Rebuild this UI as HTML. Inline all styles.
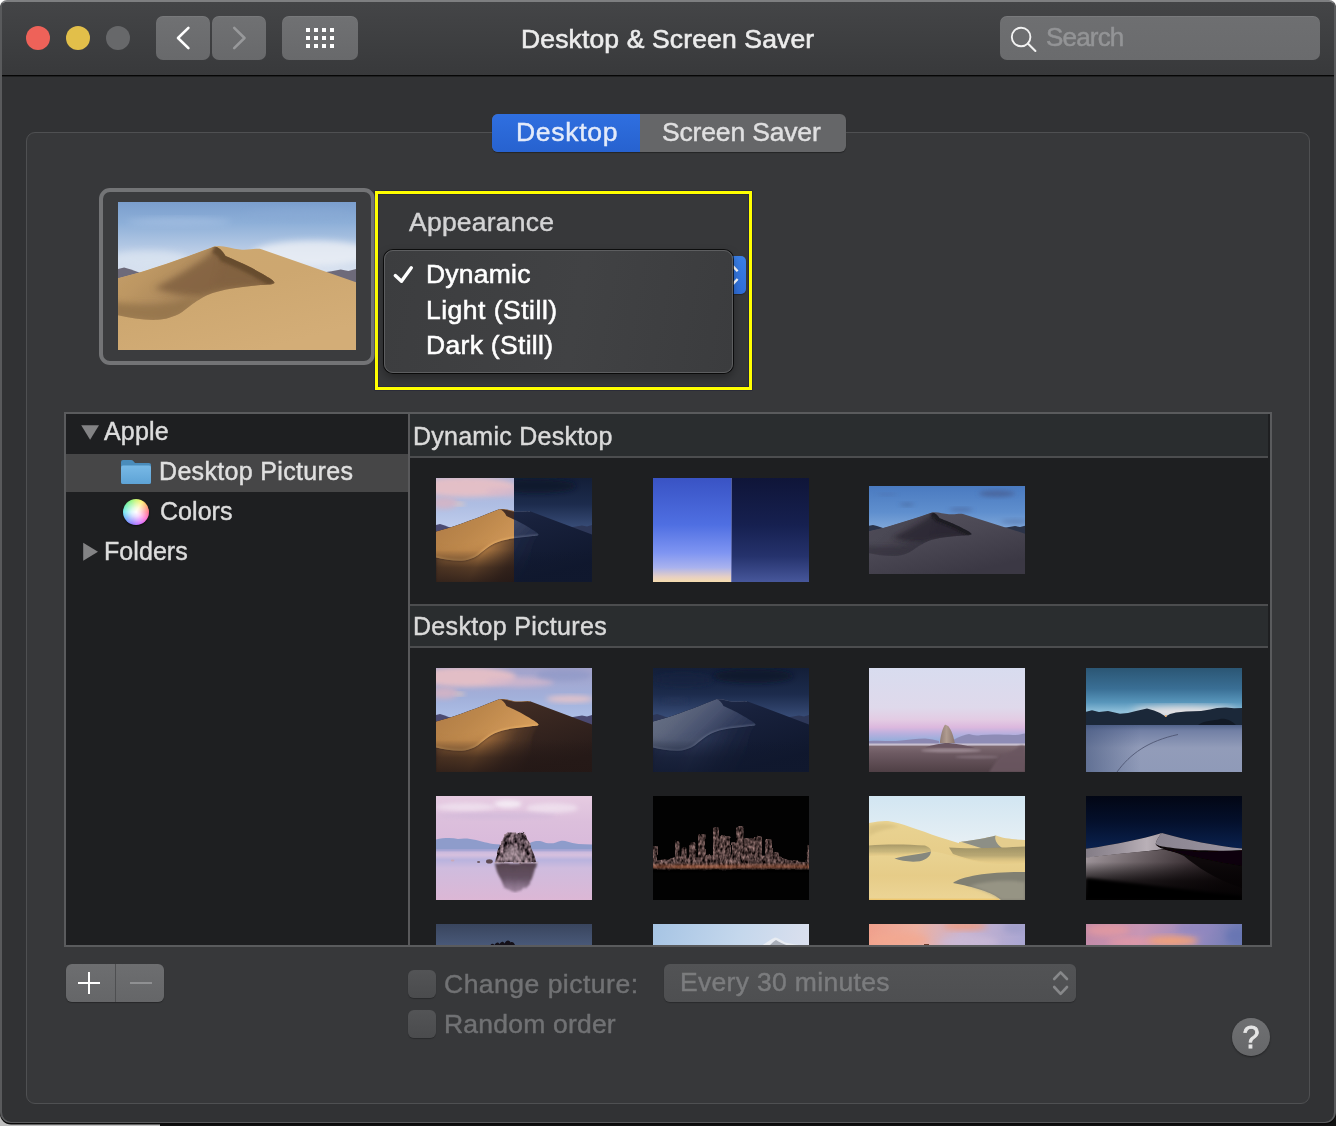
<!DOCTYPE html>
<html lang="en"><head><meta charset="utf-8"><title>Desktop &amp; Screen Saver</title>
<style>
html,body{margin:0;padding:0}
body{width:1336px;height:1126px;position:relative;overflow:hidden;background:#fff;font-family:"Liberation Sans",sans-serif}
.a{position:absolute}
.t{position:absolute;white-space:pre;line-height:1;will-change:transform}
#under{left:0;top:1100px;width:1336px;height:26px;background:#111}
#undl{left:0;top:1108px;width:160px;height:18px;background:#bdbdbd}
#win{left:0;top:0;width:1332px;height:1120px;border:2px solid #595a5c;border-top-color:#7e7f81;border-bottom-width:1.5px;border-radius:7px 7px 11px 11px;background:#313234;overflow:hidden;box-shadow:0 1.5px 0 0 #080808}
#tb{left:2px;top:2px;width:1332px;height:73px;background:linear-gradient(#444547,#38393b);border-radius:5px 5px 0 0}
#tbl{left:2px;top:75px;width:1332px;height:1px;background:#060606;box-shadow:0 1px 0 rgba(0,0,0,.35)}
.tl{width:24px;height:24px;border-radius:50%;top:26px}
.btn{background:linear-gradient(#707173,#68696b);border-radius:7px;top:16px;height:44px;box-shadow:inset 0 1px 0 rgba(255,255,255,.06)}
#search{left:1000px;top:16px;width:320px;height:44px;border-radius:7px;background:linear-gradient(#6e6f71,#6a6b6d);box-shadow:inset 0 1px 0 rgba(255,255,255,.08)}
#box{left:26px;top:132px;width:1282px;height:970px;border:1px solid #4f5052;border-radius:9px;background:#37383a}
#tabs{left:492px;top:114px;width:354px;height:38px;border-radius:6px;overflow:hidden;background:#656668;box-shadow:0 1px 1px rgba(0,0,0,.35)}
#tabA{left:0;top:0;width:148px;height:38px;background:linear-gradient(#2f6fe0,#2762cf)}
#well{left:99px;top:188px;width:268px;height:169px;border:4px solid #737476;border-radius:11px;background:#3b3c3e}
#yel{left:375px;top:191px;width:371px;height:193px;border:3px solid #ffff00;box-shadow:0 0 0 .6px rgba(20,20,60,.55),inset 0 0 0 .6px rgba(20,20,60,.55)}
#pop{left:716px;top:256px;width:30px;height:38px;border-radius:5px;background:linear-gradient(#3a7fe6,#2f6ed8);box-shadow:0 1px 1px rgba(0,0,0,.3)}
#menu{left:384px;top:250px;width:347px;height:121px;border:1px solid #5d5e60;border-radius:9px;background:linear-gradient(100deg,#3c3d3f,#414244 55%,#3b3c3e);box-shadow:0 0 0 1px rgba(0,0,0,.75),0 4px 10px rgba(0,0,0,.35)}
#list{left:64px;top:412px;width:1204px;height:531px;border:2px solid #5a5b5d;background:#1e1f21;overflow:hidden}
#sel{left:0;top:40px;width:342px;height:38px;background:#464647}
#div{left:342px;top:0;width:2px;height:531px;background:#59595b}
.hd{left:344px;width:858px;background:#2a2d2f;border-bottom:2px solid #4c4d4f}
.th{position:absolute;width:156px;height:104px;overflow:hidden}
.th svg{display:block}
#pm{left:66px;top:964px;width:98px;height:38px;border-radius:6px;background:linear-gradient(#6d6e70,#656668);box-shadow:0 1px 1px rgba(0,0,0,.3)}
.cb{left:408px;width:28px;height:28px;border-radius:6px;background:linear-gradient(#535456,#4a4b4d);box-shadow:0 1px 1px rgba(0,0,0,.25)}
#every{left:664px;top:964px;width:412px;height:38px;border-radius:6px;background:linear-gradient(#525355,#4e4f51);box-shadow:0 1px 1px rgba(0,0,0,.25)}
#help{left:1232px;top:1018px;width:38px;height:38px;border-radius:50%;background:linear-gradient(#6f7072,#666769);box-shadow:0 1px 2px rgba(0,0,0,.4)}
</style></head>
<body>
<div class="a" id="under"></div><div class="a" id="undl"></div>
<div class="a" id="win"></div>
<div class="a" id="tb"></div><div class="a" id="tbl"></div>
<div class="a tl" style="left:26px;background:#ee6259"></div>
<div class="a tl" style="left:66px;background:#e2bf4a"></div>
<div class="a tl" style="left:106px;background:#67686a"></div>
<div class="a btn" style="left:156px;width:54px"></div>
<div class="a btn" style="left:212px;width:54px"></div>
<div class="a btn" style="left:282px;width:76px"></div>
<svg class="a" style="left:156px;top:16px" width="202" height="44" viewBox="156 16 202 44"><path d="M188.4 27.9 L178 38 L188.4 48.1" fill="none" stroke="#fff" stroke-width="2.6" stroke-linecap="round" stroke-linejoin="round"/><path d="M234.2 27.9 L244.5 38 L234.2 48.1" fill="none" stroke="#98999b" stroke-width="2.6" stroke-linecap="round" stroke-linejoin="round"/><rect x="306" y="28" width="4" height="4" fill="#fff"/><rect x="314" y="28" width="4" height="4" fill="#fff"/><rect x="322" y="28" width="4" height="4" fill="#fff"/><rect x="330" y="28" width="4" height="4" fill="#fff"/><rect x="306" y="36" width="4" height="4" fill="#fff"/><rect x="314" y="36" width="4" height="4" fill="#fff"/><rect x="322" y="36" width="4" height="4" fill="#fff"/><rect x="330" y="36" width="4" height="4" fill="#fff"/><rect x="306" y="44" width="4" height="4" fill="#fff"/><rect x="314" y="44" width="4" height="4" fill="#fff"/><rect x="322" y="44" width="4" height="4" fill="#fff"/><rect x="330" y="44" width="4" height="4" fill="#fff"/></svg>
<span class="t" style="left:520.7px;top:25.5px;font-size:26.5px;letter-spacing:0.143px;color:#ececec;-webkit-text-stroke:0.6px currentColor;">Desktop &amp; Screen Saver</span>
<div class="a" id="search"></div>
<svg class="a" style="left:1008px;top:24px" width="32" height="32" viewBox="1008 24 32 32"><circle cx="1021.1" cy="37" r="9.3" fill="none" stroke="#f2f2f2" stroke-width="1.9"/><path d="M1027.9 43.6 L1035.4 51" stroke="#f2f2f2" stroke-width="2.1" stroke-linecap="round"/></svg>
<span class="t" style="left:1045.9px;top:23.9px;font-size:26px;letter-spacing:-0.82px;color:#939496;-webkit-text-stroke:0.5px currentColor;">Search</span>
<div class="a" id="box"></div>
<div class="a" id="tabs"><div class="a" id="tabA"></div></div>
<span class="t" style="left:515.7px;top:119.3px;font-size:26.5px;letter-spacing:0.7px;color:#e4ebfa;-webkit-text-stroke:0.45px currentColor;">Desktop</span>
<span class="t" style="left:662.2px;top:119.3px;font-size:26.5px;letter-spacing:-0.164px;color:#e0e0e1;-webkit-text-stroke:0.45px currentColor;">Screen Saver</span>
<div class="a" id="well"></div>
<div class="a" style="left:118px;top:202px;width:238px;height:148px;overflow:hidden"><svg width="238" height="148" viewBox="0 0 156 104" preserveAspectRatio="none"><defs><linearGradient id="pvs" x1="0" y1="0" x2="0" y2="1"><stop offset="0" stop-color="#7b9ecd"/><stop offset="0.14" stop-color="#8dafd8"/><stop offset="0.3" stop-color="#b3c8e4"/><stop offset="0.44" stop-color="#d3deee"/><stop offset="0.56" stop-color="#e6ebf3"/><stop offset="1" stop-color="#e6ebf3"/></linearGradient><linearGradient id="pvb" x1="0" y1="0" x2="0.6" y2="1"><stop offset="0" stop-color="#cda870"/><stop offset="0.5" stop-color="#cda770"/><stop offset="1" stop-color="#d3ad77"/></linearGradient><linearGradient id="pvl" x1="0" y1="0" x2="1" y2="0.5"><stop offset="0" stop-color="#c6a06b"/><stop offset="0.3" stop-color="#bd9763"/><stop offset="0.62" stop-color="#a8855a"/><stop offset="1" stop-color="#94734c"/></linearGradient><filter id="pvf" x="-30%" y="-30%" width="160%" height="160%"><feGaussianBlur stdDeviation="2.4"/></filter><filter id="pvg" x="-30%" y="-30%" width="160%" height="160%"><feGaussianBlur stdDeviation="1.2"/></filter><filter id="pvh" x="-30%" y="-30%" width="160%" height="160%"><feGaussianBlur stdDeviation="0.45"/></filter><filter id="pvk" x="-30%" y="-30%" width="160%" height="160%"><feGaussianBlur stdDeviation="5"/></filter><clipPath id="pvc"><path d="M0,53.5 L14,49.5 C30,44.5 50,36.5 63,31.3 C68,29.8 74,32.8 80,33.4 C86,34 91,32.2 94,33.2 L156,56.4 L156,104 L0,104 Z"/></clipPath><clipPath id="pvd"><path d="M0,53.5 L14,49.5 C30,44.5 50,36.5 63,31.3 C66,31.4 68.5,34.2 70.5,38 C76,40.5 86,45 93,49.6 C98,52.8 101.5,54.6 102.6,56.6 C102.6,58.2 98,58 93.6,58.4 C88,59 82,59.6 76,60.6 C69,61.8 63,63.2 58.3,65.6 C53,68.4 50,71 46.5,73.6 C43,76.4 41,78.4 37.7,79.8 C34,81.4 30,82.6 25.9,82.8 C17,83.2 8,81.4 0,79.6 Z"/></clipPath></defs><rect width="156" height="104" fill="url(#pvs)"/><ellipse cx="40" cy="14" rx="34" ry="3" fill="#a6c0e2" opacity="0.7" filter="url(#pvf)"/><ellipse cx="128" cy="36" rx="40" ry="9" fill="#eef1f6" opacity="0.8" filter="url(#pvf)"/><ellipse cx="20" cy="40" rx="26" ry="6" fill="#dde6f2" opacity="0.7" filter="url(#pvf)"/><ellipse cx="118" cy="9" rx="34" ry="4" fill="#8aaad5" opacity="0.5" filter="url(#pvf)"/><path d="M0,47 L4,46 L8,47.3 L14,49.6 L18,56 L0,56 Z" fill="#6d6a7a"/><path d="M134,49.5 L140,48.6 L146,47.4 L151,48.4 L156,47 L156,60 L134,60 Z" fill="#6d6a7a"/><path d="M0,53.5 L14,49.5 C30,44.5 50,36.5 63,31.3 C68,29.8 74,32.8 80,33.4 C86,34 91,32.2 94,33.2 L156,56.4 L156,104 L0,104 Z" fill="url(#pvb)"/><g clip-path="url(#pvc)"><path d="M0,53.5 L14,49.5 C30,44.5 50,36.5 63,31.3 C66,31.4 68.5,34.2 70.5,38 C76,40.5 86,45 93,49.6 C98,52.8 101.5,54.6 102.6,56.6 C102.6,58.2 98,58 93.6,58.4 C88,59 82,59.6 76,60.6 C69,61.8 63,63.2 58.3,65.6 C53,68.4 50,71 46.5,73.6 C43,76.4 41,78.4 37.7,79.8 C34,81.4 30,82.6 25.9,82.8 C17,83.2 8,81.4 0,79.6 Z" fill="url(#pvl)" filter="url(#pvh)"/><g clip-path="url(#pvd)"><path d="M64,32.5 C67,34 69,36 70.5,38 C76,40.5 86,45 93,49.6 C98,52.8 101.5,54.6 102.6,56.6 C102.6,58.2 98,58 93.6,58.4 C88,59 82,59.6 76,60.6 C69,61.8 63,63.2 58.3,65.6 C48,67 34,65 24,60.5 C34,55 46,47.5 57,39.5 Z" fill="#80613f" opacity="0.85" filter="url(#pvf)"/><path d="M66,34 C68,35 69.5,36.6 70.5,38 C76,40.5 86,45 93,49.6 C98,52.8 101.5,54.6 102.6,56.6 C100,58 96,58 93.6,58.4 C84,58 74,58 64,58 C66,52 70,44 66,34 Z" fill="#80613f" opacity="0.51" filter="url(#pvf)"/><path d="M-4,70 C14,73 34,73 52,66 C48,74 42,80 30,84 L-4,82 Z" fill="#94744c" opacity="0.85" filter="url(#pvf)"/><path d="M63.2,31.6 C66,32.6 68.6,34.8 70.5,38 C76,40.5 86,45 93,49.6 C98,52.8 101.5,54.6 102.6,56.6 " fill="none" stroke="#664b2e" stroke-width="9" opacity="0.95" filter="url(#pvg)"/></g></g></svg></div>
<div class="a" id="pop"></div>
<svg class="a" style="left:732px;top:262px" width="14" height="28" viewBox="732 262 14 28"><path d="M729 271.2 L733.3 266.6 L737.6 271.2 M729 279 L733.3 283.6 L737.6 279" fill="none" stroke="#fff" stroke-width="2.4" stroke-linecap="butt" stroke-linejoin="round"/></svg>
<div class="a" id="yel"></div>
<span class="t" style="left:408.8px;top:209.3px;font-size:26.5px;letter-spacing:0.233px;color:#d4d4d5;-webkit-text-stroke:0.45px currentColor;">Appearance</span>
<div class="a" id="menu"></div>
<svg class="a" style="left:390px;top:260px" width="30" height="30" viewBox="390 260 30 30"><path d="M395.3 275.6 L401.5 281.3 L411.3 267.8" fill="none" stroke="#fff" stroke-width="3.4" stroke-linecap="round" stroke-linejoin="round"/></svg>
<span class="t" style="left:425.7px;top:261.0px;font-size:26.5px;letter-spacing:0.217px;color:#ffffff;-webkit-text-stroke:0.55px currentColor;">Dynamic</span>
<span class="t" style="left:425.7px;top:296.6px;font-size:26.5px;letter-spacing:0.492px;color:#ffffff;-webkit-text-stroke:0.55px currentColor;">Light (Still)</span>
<span class="t" style="left:425.7px;top:332.1px;font-size:26.5px;letter-spacing:0.309px;color:#ffffff;-webkit-text-stroke:0.55px currentColor;">Dark (Still)</span>
<div class="a" id="list"><div class="a" id="sel"></div><div class="a" id="div"></div><div class="a hd" style="top:0;height:42px"></div><div class="a hd" style="top:190px;height:40px;border-top:2px solid #4c4d4f"></div><div class="th" style="left:370px;top:64px;width:156px;height:104px"><div style="position:absolute;left:0;top:0;width:78px;height:104px;overflow:hidden"><svg width="156" height="104" viewBox="0 0 156 104" preserveAspectRatio="none"><defs><linearGradient id="d1as" x1="0" y1="0" x2="0" y2="1"><stop offset="0" stop-color="#b4b4d6"/><stop offset="0.25" stop-color="#aebde2"/><stop offset="0.5" stop-color="#c0ceee"/><stop offset="1" stop-color="#c0ceee"/></linearGradient><linearGradient id="d1ab" x1="0" y1="0" x2="0.6" y2="1"><stop offset="0" stop-color="#4e3429"/><stop offset="0.4" stop-color="#3c2922"/><stop offset="1" stop-color="#271b19"/></linearGradient><linearGradient id="d1al" x1="0" y1="0" x2="1" y2="0.5"><stop offset="0" stop-color="#ad7a45"/><stop offset="0.45" stop-color="#bc874c"/><stop offset="0.8" stop-color="#cd9555"/><stop offset="1" stop-color="#d89f5b"/></linearGradient><linearGradient id="d1at" x1="0" y1="0" x2="0" y2="1"><stop offset="0" stop-color="#241816" stop-opacity="0"/><stop offset="0.55" stop-color="#241816" stop-opacity="0.6375"/><stop offset="1" stop-color="#241816" stop-opacity="0.85"/></linearGradient><linearGradient id="d1aw" x1="0" y1="0" x2="1" y2="0.25"><stop offset="0" stop-color="#b07a42" stop-opacity="0.15"/><stop offset="0.2" stop-color="#b07a42" stop-opacity="0.75"/><stop offset="0.5" stop-color="#b07a42" stop-opacity="1.0"/><stop offset="0.78" stop-color="#b07a42" stop-opacity="0.25"/><stop offset="1" stop-color="#b07a42" stop-opacity="0"/></linearGradient><filter id="d1af" x="-30%" y="-30%" width="160%" height="160%"><feGaussianBlur stdDeviation="2.4"/></filter><filter id="d1ag" x="-30%" y="-30%" width="160%" height="160%"><feGaussianBlur stdDeviation="1.2"/></filter><filter id="d1ah" x="-30%" y="-30%" width="160%" height="160%"><feGaussianBlur stdDeviation="0.45"/></filter><filter id="d1ak" x="-30%" y="-30%" width="160%" height="160%"><feGaussianBlur stdDeviation="5"/></filter><clipPath id="d1ac"><path d="M0,53.5 L14,49.5 C30,44.5 50,36.5 63,31.3 C68,29.8 74,32.8 80,33.4 C86,34 91,32.2 94,33.2 L156,56.4 L156,104 L0,104 Z"/></clipPath><clipPath id="d1ad"><path d="M0,53.5 L14,49.5 C30,44.5 50,36.5 63,31.3 C66,31.4 68.5,34.2 70.5,38 C76,40.5 86,45 93,49.6 C98,52.8 101.5,54.6 102.6,56.6 C102.6,58.2 98,58 93.6,58.4 C88,59 82,59.6 76,60.6 C69,61.8 63,63.2 58.3,65.6 C53,68.4 50,71 46.5,73.6 C43,76.4 41,78.4 37.7,79.8 C34,81.4 30,82.6 25.9,82.8 C17,83.2 8,81.4 0,79.6 Z"/></clipPath></defs><rect width="156" height="104" fill="url(#d1as)"/><ellipse cx="30" cy="9" rx="50" ry="10" fill="#e6c0c6" opacity="0.95" filter="url(#d1af)"/><ellipse cx="8" cy="25" rx="14" ry="6" fill="#d9b4c2" opacity="0.8" filter="url(#d1af)"/><ellipse cx="84" cy="14" rx="34" ry="5" fill="#d7b8cb" opacity="0.75" filter="url(#d1af)"/><ellipse cx="134" cy="31" rx="24" ry="3.4" fill="#e8c4c8" opacity="0.9" filter="url(#d1af)"/><ellipse cx="128" cy="7" rx="28" ry="6" fill="#8b96c6" opacity="0.6" filter="url(#d1af)"/><ellipse cx="24" cy="26" rx="5" ry="1.6" fill="#f0cdb8" opacity="0.9" filter="url(#d1af)"/><path d="M0,47 L4,46 L8,47.3 L14,49.6 L18,56 L0,56 Z" fill="#4b4a72"/><path d="M134,49.5 L140,48.6 L146,47.4 L151,48.4 L156,47 L156,60 L134,60 Z" fill="#4b4a72"/><path d="M0,53.5 L14,49.5 C30,44.5 50,36.5 63,31.3 C68,29.8 74,32.8 80,33.4 C86,34 91,32.2 94,33.2 L156,56.4 L156,104 L0,104 Z" fill="url(#d1ab)"/><g clip-path="url(#d1ac)"><path d="M102.6,56.6 C102.6,58.2 98,58 93.6,58.4 C88,59 82,59.6 76,60.6 C69,61.8 63,63.2 58.3,65.6 C53,68.4 50,71 46.5,73.6 C43,76.4 41,78.4 37.7,79.8 C34,81.4 30,82.6 25.9,82.8 C17,83.2 8,81.4 0,79.6  L0,110 L104,110 C92,92 92,70 102.6,56.6 Z" fill="url(#d1aw)" filter="url(#d1ag)"/><path d="M0,53.5 L14,49.5 C30,44.5 50,36.5 63,31.3 C66,31.4 68.5,34.2 70.5,38 C76,40.5 86,45 93,49.6 C98,52.8 101.5,54.6 102.6,56.6 C102.6,58.2 98,58 93.6,58.4 C88,59 82,59.6 76,60.6 C69,61.8 63,63.2 58.3,65.6 C53,68.4 50,71 46.5,73.6 C43,76.4 41,78.4 37.7,79.8 C34,81.4 30,82.6 25.9,82.8 C17,83.2 8,81.4 0,79.6 Z" fill="url(#d1al)" filter="url(#d1ah)"/><g clip-path="url(#d1ad)"><path d="M-4,70 C14,73 34,73 52,66 C48,74 42,80 30,84 L-4,82 Z" fill="#b07c44" opacity="0.5" filter="url(#d1af)"/><path d="M102.6,56.6 C102.6,58.2 98,58 93.6,58.4 C88,59 82,59.6 76,60.6 C69,61.8 63,63.2 58.3,65.6 C53,68.4 50,71 46.5,73.6 C43,76.4 41,78.4 37.7,79.8 C34,81.4 30,82.6 25.9,82.8 C17,83.2 8,81.4 0,79.6 " fill="none" stroke="#eab26a" stroke-width="2.2" opacity="0.8" filter="url(#d1ag)"/></g><path d="M63,31.3 C68,29.8 74,32.8 80,33.4 C86,34 91,32.2 94,33.2" fill="none" stroke="#c49056" stroke-width="0.9"/><rect x="0" y="72" width="156" height="32" fill="url(#d1at)"/></g></svg></div><div style="position:absolute;left:78px;top:0;width:78px;height:104px;overflow:hidden"><div style="margin-left:-78px"><svg width="156" height="104" viewBox="0 0 156 104" preserveAspectRatio="none"><defs><linearGradient id="d1bs" x1="0" y1="0" x2="0" y2="1"><stop offset="0" stop-color="#131e38"/><stop offset="0.25" stop-color="#1c2b4c"/><stop offset="0.5" stop-color="#3b507c"/><stop offset="1" stop-color="#3b507c"/></linearGradient><linearGradient id="d1bb" x1="0" y1="0" x2="0.6" y2="1"><stop offset="0" stop-color="#222d4c"/><stop offset="0.4" stop-color="#18213c"/><stop offset="1" stop-color="#0f172d"/></linearGradient><linearGradient id="d1bl" x1="0" y1="0" x2="1" y2="0.5"><stop offset="0" stop-color="#6d7689"/><stop offset="0.35" stop-color="#5c657c"/><stop offset="0.6" stop-color="#48526f"/><stop offset="0.8" stop-color="#323d5c"/><stop offset="1" stop-color="#262f4e"/></linearGradient><linearGradient id="d1bt" x1="0" y1="0" x2="0" y2="1"><stop offset="0" stop-color="#10182e" stop-opacity="0"/><stop offset="0.55" stop-color="#10182e" stop-opacity="0.6000000000000001"/><stop offset="1" stop-color="#10182e" stop-opacity="0.8"/></linearGradient><linearGradient id="d1bw" x1="0" y1="0" x2="1" y2="0.25"><stop offset="0" stop-color="#2c3756" stop-opacity="0.15"/><stop offset="0.2" stop-color="#2c3756" stop-opacity="0.75"/><stop offset="0.5" stop-color="#2c3756" stop-opacity="0.9"/><stop offset="0.78" stop-color="#2c3756" stop-opacity="0.25"/><stop offset="1" stop-color="#2c3756" stop-opacity="0"/></linearGradient><filter id="d1bf" x="-30%" y="-30%" width="160%" height="160%"><feGaussianBlur stdDeviation="2.4"/></filter><filter id="d1bg" x="-30%" y="-30%" width="160%" height="160%"><feGaussianBlur stdDeviation="1.2"/></filter><filter id="d1bh" x="-30%" y="-30%" width="160%" height="160%"><feGaussianBlur stdDeviation="0.45"/></filter><filter id="d1bk" x="-30%" y="-30%" width="160%" height="160%"><feGaussianBlur stdDeviation="5"/></filter><clipPath id="d1bc"><path d="M0,53.5 L14,49.5 C30,44.5 50,36.5 63,31.3 C68,29.8 74,32.8 80,33.4 C86,34 91,32.2 94,33.2 L156,56.4 L156,104 L0,104 Z"/></clipPath><clipPath id="d1bd"><path d="M0,53.5 L14,49.5 C30,44.5 50,36.5 63,31.3 C66,31.4 68.5,34.2 70.5,38 C76,40.5 86,45 93,49.6 C98,52.8 101.5,54.6 102.6,56.6 C102.6,58.2 98,58 93.6,58.4 C88,59 82,59.6 76,60.6 C69,61.8 63,63.2 58.3,65.6 C53,68.4 50,71 46.5,73.6 C43,76.4 41,78.4 37.7,79.8 C34,81.4 30,82.6 25.9,82.8 C17,83.2 8,81.4 0,79.6 Z"/></clipPath></defs><rect width="156" height="104" fill="url(#d1bs)"/><ellipse cx="100" cy="8" rx="40" ry="7" fill="#0c1428" opacity="0.7" filter="url(#d1bf)"/><ellipse cx="22" cy="33" rx="12" ry="3" fill="#26355a" opacity="0.8" filter="url(#d1bf)"/><ellipse cx="30" cy="12" rx="30" ry="6" fill="#18243f" opacity="0.6" filter="url(#d1bf)"/><path d="M0,47 L4,46 L8,47.3 L14,49.6 L18,56 L0,56 Z" fill="#2d3758"/><path d="M134,49.5 L140,48.6 L146,47.4 L151,48.4 L156,47 L156,60 L134,60 Z" fill="#2d3758"/><path d="M0,53.5 L14,49.5 C30,44.5 50,36.5 63,31.3 C68,29.8 74,32.8 80,33.4 C86,34 91,32.2 94,33.2 L156,56.4 L156,104 L0,104 Z" fill="url(#d1bb)"/><g clip-path="url(#d1bc)"><path d="M102.6,56.6 C102.6,58.2 98,58 93.6,58.4 C88,59 82,59.6 76,60.6 C69,61.8 63,63.2 58.3,65.6 C53,68.4 50,71 46.5,73.6 C43,76.4 41,78.4 37.7,79.8 C34,81.4 30,82.6 25.9,82.8 C17,83.2 8,81.4 0,79.6  L0,110 L104,110 C92,92 92,70 102.6,56.6 Z" fill="url(#d1bw)" filter="url(#d1bg)"/><path d="M0,53.5 L14,49.5 C30,44.5 50,36.5 63,31.3 C66,31.4 68.5,34.2 70.5,38 C76,40.5 86,45 93,49.6 C98,52.8 101.5,54.6 102.6,56.6 C102.6,58.2 98,58 93.6,58.4 C88,59 82,59.6 76,60.6 C69,61.8 63,63.2 58.3,65.6 C53,68.4 50,71 46.5,73.6 C43,76.4 41,78.4 37.7,79.8 C34,81.4 30,82.6 25.9,82.8 C17,83.2 8,81.4 0,79.6 Z" fill="url(#d1bl)" filter="url(#d1bh)"/><g clip-path="url(#d1bd)"><path d="M-4,70 C14,73 34,73 52,66 C48,74 42,80 30,84 L-4,82 Z" fill="#4a536b" opacity="0.5" filter="url(#d1bf)"/><path d="M102.6,56.6 C102.6,58.2 98,58 93.6,58.4 C88,59 82,59.6 76,60.6 C69,61.8 63,63.2 58.3,65.6 C53,68.4 50,71 46.5,73.6 C43,76.4 41,78.4 37.7,79.8 C34,81.4 30,82.6 25.9,82.8 C17,83.2 8,81.4 0,79.6 " fill="none" stroke="#8892aa" stroke-width="1.8" opacity="0.6" filter="url(#d1bg)"/></g><path d="M63,31.3 C68,29.8 74,32.8 80,33.4 C86,34 91,32.2 94,33.2" fill="none" stroke="#5a6480" stroke-width="0.8"/><rect x="0" y="72" width="156" height="32" fill="url(#d1bt)"/></g></svg></div></div></div><div class="th" style="left:587px;top:64px;width:156px;height:104px"><svg width="156" height="104" viewBox="0 0 156 104"><defs><linearGradient id="g2a" x1="0" y1="0" x2="0" y2="1"><stop offset="0" stop-color="#3953c4"/><stop offset="0.45" stop-color="#4f6fe2"/><stop offset="0.72" stop-color="#7f95f2"/><stop offset="0.86" stop-color="#a9b2ee"/><stop offset="0.95" stop-color="#e6cfc4"/><stop offset="1" stop-color="#f6dcae"/></linearGradient><linearGradient id="g2b" x1="0" y1="0" x2="0" y2="1"><stop offset="0" stop-color="#0f1538"/><stop offset="0.45" stop-color="#162050"/><stop offset="0.75" stop-color="#25326c"/><stop offset="1" stop-color="#47579b"/></linearGradient></defs><rect width="78.5" height="104" fill="url(#g2a)"/><rect x="78.5" width="77.5" height="104" fill="url(#g2b)"/><rect x="78" width="1" height="104" fill="#7d8ad8" opacity=".55"/></svg></div><div class="th" style="left:803px;top:72px;width:156px;height:88px"><svg width="156" height="88" viewBox="0 0 156 104" preserveAspectRatio="none"><defs><linearGradient id="d3s" x1="0" y1="0" x2="0" y2="1"><stop offset="0" stop-color="#4a7ac0"/><stop offset="0.3" stop-color="#5f8fce"/><stop offset="0.52" stop-color="#86acdc"/><stop offset="1" stop-color="#86acdc"/></linearGradient><linearGradient id="d3b" x1="0" y1="0" x2="0.6" y2="1"><stop offset="0" stop-color="#55525e"/><stop offset="0.5" stop-color="#4b4854"/><stop offset="1" stop-color="#3b3844"/></linearGradient><linearGradient id="d3l" x1="0" y1="0" x2="1" y2="0.5"><stop offset="0" stop-color="#514e5a"/><stop offset="0.35" stop-color="#4a4753"/><stop offset="0.7" stop-color="#3d3a46"/><stop offset="1" stop-color="#34323c"/></linearGradient><filter id="d3f" x="-30%" y="-30%" width="160%" height="160%"><feGaussianBlur stdDeviation="2.4"/></filter><filter id="d3g" x="-30%" y="-30%" width="160%" height="160%"><feGaussianBlur stdDeviation="1.2"/></filter><filter id="d3h" x="-30%" y="-30%" width="160%" height="160%"><feGaussianBlur stdDeviation="0.45"/></filter><filter id="d3k" x="-30%" y="-30%" width="160%" height="160%"><feGaussianBlur stdDeviation="5"/></filter><clipPath id="d3c"><path d="M0,53.5 L14,49.5 C30,44.5 50,36.5 63,31.3 C68,29.8 74,32.8 80,33.4 C86,34 91,32.2 94,33.2 L156,56.4 L156,104 L0,104 Z"/></clipPath><clipPath id="d3d"><path d="M0,53.5 L14,49.5 C30,44.5 50,36.5 63,31.3 C66,31.4 68.5,34.2 70.5,38 C76,40.5 86,45 93,49.6 C98,52.8 101.5,54.6 102.6,56.6 C102.6,58.2 98,58 93.6,58.4 C88,59 82,59.6 76,60.6 C69,61.8 63,63.2 58.3,65.6 C53,68.4 50,71 46.5,73.6 C43,76.4 41,78.4 37.7,79.8 C34,81.4 30,82.6 25.9,82.8 C17,83.2 8,81.4 0,79.6 Z"/></clipPath></defs><rect width="156" height="104" fill="url(#d3s)"/><ellipse cx="128" cy="9" rx="18" ry="4" fill="#48649a" opacity="0.85" filter="url(#d3f)"/><ellipse cx="38" cy="22" rx="7" ry="2" fill="#4a6aa0" opacity="0.8" filter="url(#d3f)"/><ellipse cx="92" cy="28" rx="12" ry="2.5" fill="#4f6ea6" opacity="0.8" filter="url(#d3f)"/><ellipse cx="18" cy="10" rx="10" ry="1.5" fill="#4f72ae" opacity="0.7" filter="url(#d3f)"/><ellipse cx="146" cy="42" rx="14" ry="3" fill="#5c7fb6" opacity="0.8" filter="url(#d3f)"/><path d="M0,47 L4,46 L8,47.3 L14,49.6 L18,56 L0,56 Z" fill="#2b3348"/><path d="M134,49.5 L140,48.6 L146,47.4 L151,48.4 L156,47 L156,60 L134,60 Z" fill="#2b3348"/><path d="M0,53.5 L14,49.5 C30,44.5 50,36.5 63,31.3 C68,29.8 74,32.8 80,33.4 C86,34 91,32.2 94,33.2 L156,56.4 L156,104 L0,104 Z" fill="url(#d3b)"/><g clip-path="url(#d3c)"><path d="M0,53.5 L14,49.5 C30,44.5 50,36.5 63,31.3 C66,31.4 68.5,34.2 70.5,38 C76,40.5 86,45 93,49.6 C98,52.8 101.5,54.6 102.6,56.6 C102.6,58.2 98,58 93.6,58.4 C88,59 82,59.6 76,60.6 C69,61.8 63,63.2 58.3,65.6 C53,68.4 50,71 46.5,73.6 C43,76.4 41,78.4 37.7,79.8 C34,81.4 30,82.6 25.9,82.8 C17,83.2 8,81.4 0,79.6 Z" fill="url(#d3l)" filter="url(#d3h)"/><g clip-path="url(#d3d)"><path d="M64,32.5 C67,34 69,36 70.5,38 C76,40.5 86,45 93,49.6 C98,52.8 101.5,54.6 102.6,56.6 C102.6,58.2 98,58 93.6,58.4 C88,59 82,59.6 76,60.6 C69,61.8 63,63.2 58.3,65.6 C48,67 34,65 24,60.5 C34,55 46,47.5 57,39.5 Z" fill="#2a2831" opacity="0.8" filter="url(#d3f)"/><path d="M66,34 C68,35 69.5,36.6 70.5,38 C76,40.5 86,45 93,49.6 C98,52.8 101.5,54.6 102.6,56.6 C100,58 96,58 93.6,58.4 C84,58 74,58 64,58 C66,52 70,44 66,34 Z" fill="#2a2831" opacity="0.48" filter="url(#d3f)"/><path d="M-4,70 C14,73 34,73 52,66 C48,74 42,80 30,84 L-4,82 Z" fill="#35333d" opacity="0.7" filter="url(#d3f)"/><path d="M63.2,31.6 C66,32.6 68.6,34.8 70.5,38 C76,40.5 86,45 93,49.6 C98,52.8 101.5,54.6 102.6,56.6 " fill="none" stroke="#1c1a22" stroke-width="9" opacity="0.95" filter="url(#d3g)"/></g></g></svg></div><div class="th" style="left:370px;top:254px;width:156px;height:104px"><svg width="156" height="104" viewBox="0 0 156 104" preserveAspectRatio="none"><defs><linearGradient id="p1s" x1="0" y1="0" x2="0" y2="1"><stop offset="0" stop-color="#a3a2ca"/><stop offset="0.28" stop-color="#a2b0da"/><stop offset="0.5" stop-color="#adc0e8"/><stop offset="1" stop-color="#adc0e8"/></linearGradient><linearGradient id="p1b" x1="0" y1="0" x2="0.6" y2="1"><stop offset="0" stop-color="#4e3429"/><stop offset="0.4" stop-color="#3c2922"/><stop offset="1" stop-color="#271b19"/></linearGradient><linearGradient id="p1l" x1="0" y1="0" x2="1" y2="0.5"><stop offset="0" stop-color="#ad7a45"/><stop offset="0.45" stop-color="#bc874c"/><stop offset="0.8" stop-color="#cd9555"/><stop offset="1" stop-color="#d89f5b"/></linearGradient><linearGradient id="p1t" x1="0" y1="0" x2="0" y2="1"><stop offset="0" stop-color="#241816" stop-opacity="0"/><stop offset="0.55" stop-color="#241816" stop-opacity="0.6375"/><stop offset="1" stop-color="#241816" stop-opacity="0.85"/></linearGradient><linearGradient id="p1w" x1="0" y1="0" x2="1" y2="0.25"><stop offset="0" stop-color="#a06c3b" stop-opacity="0.15"/><stop offset="0.2" stop-color="#a06c3b" stop-opacity="0.75"/><stop offset="0.5" stop-color="#a06c3b" stop-opacity="0.95"/><stop offset="0.78" stop-color="#a06c3b" stop-opacity="0.25"/><stop offset="1" stop-color="#a06c3b" stop-opacity="0"/></linearGradient><filter id="p1f" x="-30%" y="-30%" width="160%" height="160%"><feGaussianBlur stdDeviation="2.4"/></filter><filter id="p1g" x="-30%" y="-30%" width="160%" height="160%"><feGaussianBlur stdDeviation="1.2"/></filter><filter id="p1h" x="-30%" y="-30%" width="160%" height="160%"><feGaussianBlur stdDeviation="0.45"/></filter><filter id="p1k" x="-30%" y="-30%" width="160%" height="160%"><feGaussianBlur stdDeviation="5"/></filter><clipPath id="p1c"><path d="M0,53.5 L14,49.5 C30,44.5 50,36.5 63,31.3 C68,29.8 74,32.8 80,33.4 C86,34 91,32.2 94,33.2 L156,56.4 L156,104 L0,104 Z"/></clipPath><clipPath id="p1d"><path d="M0,53.5 L14,49.5 C30,44.5 50,36.5 63,31.3 C66,31.4 68.5,34.2 70.5,38 C76,40.5 86,45 93,49.6 C98,52.8 101.5,54.6 102.6,56.6 C102.6,58.2 98,58 93.6,58.4 C88,59 82,59.6 76,60.6 C69,61.8 63,63.2 58.3,65.6 C53,68.4 50,71 46.5,73.6 C43,76.4 41,78.4 37.7,79.8 C34,81.4 30,82.6 25.9,82.8 C17,83.2 8,81.4 0,79.6 Z"/></clipPath></defs><rect width="156" height="104" fill="url(#p1s)"/><ellipse cx="30" cy="9" rx="50" ry="10" fill="#e6c0c6" opacity="0.95" filter="url(#p1f)"/><ellipse cx="8" cy="25" rx="14" ry="6" fill="#d9b4c2" opacity="0.8" filter="url(#p1f)"/><ellipse cx="84" cy="14" rx="34" ry="5" fill="#d7b8cb" opacity="0.75" filter="url(#p1f)"/><ellipse cx="134" cy="31" rx="24" ry="3.4" fill="#e8c4c8" opacity="0.9" filter="url(#p1f)"/><ellipse cx="128" cy="7" rx="28" ry="6" fill="#8b96c6" opacity="0.6" filter="url(#p1f)"/><ellipse cx="24" cy="26" rx="5" ry="1.6" fill="#f0cdb8" opacity="0.9" filter="url(#p1f)"/><path d="M0,47 L4,46 L8,47.3 L14,49.6 L18,56 L0,56 Z" fill="#4b4a72"/><path d="M134,49.5 L140,48.6 L146,47.4 L151,48.4 L156,47 L156,60 L134,60 Z" fill="#4b4a72"/><path d="M0,53.5 L14,49.5 C30,44.5 50,36.5 63,31.3 C68,29.8 74,32.8 80,33.4 C86,34 91,32.2 94,33.2 L156,56.4 L156,104 L0,104 Z" fill="url(#p1b)"/><g clip-path="url(#p1c)"><path d="M102.6,56.6 C102.6,58.2 98,58 93.6,58.4 C88,59 82,59.6 76,60.6 C69,61.8 63,63.2 58.3,65.6 C53,68.4 50,71 46.5,73.6 C43,76.4 41,78.4 37.7,79.8 C34,81.4 30,82.6 25.9,82.8 C17,83.2 8,81.4 0,79.6  L0,110 L104,110 C92,92 92,70 102.6,56.6 Z" fill="url(#p1w)" filter="url(#p1g)"/><path d="M0,53.5 L14,49.5 C30,44.5 50,36.5 63,31.3 C66,31.4 68.5,34.2 70.5,38 C76,40.5 86,45 93,49.6 C98,52.8 101.5,54.6 102.6,56.6 C102.6,58.2 98,58 93.6,58.4 C88,59 82,59.6 76,60.6 C69,61.8 63,63.2 58.3,65.6 C53,68.4 50,71 46.5,73.6 C43,76.4 41,78.4 37.7,79.8 C34,81.4 30,82.6 25.9,82.8 C17,83.2 8,81.4 0,79.6 Z" fill="url(#p1l)" filter="url(#p1h)"/><g clip-path="url(#p1d)"><path d="M-4,70 C14,73 34,73 52,66 C48,74 42,80 30,84 L-4,82 Z" fill="#b07c44" opacity="0.5" filter="url(#p1f)"/><path d="M102.6,56.6 C102.6,58.2 98,58 93.6,58.4 C88,59 82,59.6 76,60.6 C69,61.8 63,63.2 58.3,65.6 C53,68.4 50,71 46.5,73.6 C43,76.4 41,78.4 37.7,79.8 C34,81.4 30,82.6 25.9,82.8 C17,83.2 8,81.4 0,79.6 " fill="none" stroke="#eab26a" stroke-width="2.2" opacity="0.8" filter="url(#p1g)"/></g><path d="M63,31.3 C68,29.8 74,32.8 80,33.4 C86,34 91,32.2 94,33.2" fill="none" stroke="#c49056" stroke-width="0.9"/><rect x="0" y="72" width="156" height="32" fill="url(#p1t)"/></g></svg></div><div class="th" style="left:587px;top:254px;width:156px;height:104px"><svg width="156" height="104" viewBox="0 0 156 104" preserveAspectRatio="none"><defs><linearGradient id="p2s" x1="0" y1="0" x2="0" y2="1"><stop offset="0" stop-color="#131e38"/><stop offset="0.25" stop-color="#1c2b4c"/><stop offset="0.5" stop-color="#3b507c"/><stop offset="1" stop-color="#3b507c"/></linearGradient><linearGradient id="p2b" x1="0" y1="0" x2="0.6" y2="1"><stop offset="0" stop-color="#222d4c"/><stop offset="0.4" stop-color="#18213c"/><stop offset="1" stop-color="#0f172d"/></linearGradient><linearGradient id="p2l" x1="0" y1="0" x2="1" y2="0.5"><stop offset="0" stop-color="#6d7689"/><stop offset="0.35" stop-color="#5c657c"/><stop offset="0.6" stop-color="#48526f"/><stop offset="0.8" stop-color="#323d5c"/><stop offset="1" stop-color="#262f4e"/></linearGradient><linearGradient id="p2t" x1="0" y1="0" x2="0" y2="1"><stop offset="0" stop-color="#10182e" stop-opacity="0"/><stop offset="0.55" stop-color="#10182e" stop-opacity="0.6000000000000001"/><stop offset="1" stop-color="#10182e" stop-opacity="0.8"/></linearGradient><linearGradient id="p2w" x1="0" y1="0" x2="1" y2="0.25"><stop offset="0" stop-color="#2c3756" stop-opacity="0.15"/><stop offset="0.2" stop-color="#2c3756" stop-opacity="0.75"/><stop offset="0.5" stop-color="#2c3756" stop-opacity="0.9"/><stop offset="0.78" stop-color="#2c3756" stop-opacity="0.25"/><stop offset="1" stop-color="#2c3756" stop-opacity="0"/></linearGradient><filter id="p2f" x="-30%" y="-30%" width="160%" height="160%"><feGaussianBlur stdDeviation="2.4"/></filter><filter id="p2g" x="-30%" y="-30%" width="160%" height="160%"><feGaussianBlur stdDeviation="1.2"/></filter><filter id="p2h" x="-30%" y="-30%" width="160%" height="160%"><feGaussianBlur stdDeviation="0.45"/></filter><filter id="p2k" x="-30%" y="-30%" width="160%" height="160%"><feGaussianBlur stdDeviation="5"/></filter><clipPath id="p2c"><path d="M0,53.5 L14,49.5 C30,44.5 50,36.5 63,31.3 C68,29.8 74,32.8 80,33.4 C86,34 91,32.2 94,33.2 L156,56.4 L156,104 L0,104 Z"/></clipPath><clipPath id="p2d"><path d="M0,53.5 L14,49.5 C30,44.5 50,36.5 63,31.3 C66,31.4 68.5,34.2 70.5,38 C76,40.5 86,45 93,49.6 C98,52.8 101.5,54.6 102.6,56.6 C102.6,58.2 98,58 93.6,58.4 C88,59 82,59.6 76,60.6 C69,61.8 63,63.2 58.3,65.6 C53,68.4 50,71 46.5,73.6 C43,76.4 41,78.4 37.7,79.8 C34,81.4 30,82.6 25.9,82.8 C17,83.2 8,81.4 0,79.6 Z"/></clipPath></defs><rect width="156" height="104" fill="url(#p2s)"/><ellipse cx="100" cy="8" rx="40" ry="7" fill="#0c1428" opacity="0.7" filter="url(#p2f)"/><ellipse cx="22" cy="33" rx="12" ry="3" fill="#26355a" opacity="0.8" filter="url(#p2f)"/><ellipse cx="30" cy="12" rx="30" ry="6" fill="#18243f" opacity="0.6" filter="url(#p2f)"/><path d="M0,47 L4,46 L8,47.3 L14,49.6 L18,56 L0,56 Z" fill="#2d3758"/><path d="M134,49.5 L140,48.6 L146,47.4 L151,48.4 L156,47 L156,60 L134,60 Z" fill="#2d3758"/><path d="M0,53.5 L14,49.5 C30,44.5 50,36.5 63,31.3 C68,29.8 74,32.8 80,33.4 C86,34 91,32.2 94,33.2 L156,56.4 L156,104 L0,104 Z" fill="url(#p2b)"/><g clip-path="url(#p2c)"><path d="M102.6,56.6 C102.6,58.2 98,58 93.6,58.4 C88,59 82,59.6 76,60.6 C69,61.8 63,63.2 58.3,65.6 C53,68.4 50,71 46.5,73.6 C43,76.4 41,78.4 37.7,79.8 C34,81.4 30,82.6 25.9,82.8 C17,83.2 8,81.4 0,79.6  L0,110 L104,110 C92,92 92,70 102.6,56.6 Z" fill="url(#p2w)" filter="url(#p2g)"/><path d="M0,53.5 L14,49.5 C30,44.5 50,36.5 63,31.3 C66,31.4 68.5,34.2 70.5,38 C76,40.5 86,45 93,49.6 C98,52.8 101.5,54.6 102.6,56.6 C102.6,58.2 98,58 93.6,58.4 C88,59 82,59.6 76,60.6 C69,61.8 63,63.2 58.3,65.6 C53,68.4 50,71 46.5,73.6 C43,76.4 41,78.4 37.7,79.8 C34,81.4 30,82.6 25.9,82.8 C17,83.2 8,81.4 0,79.6 Z" fill="url(#p2l)" filter="url(#p2h)"/><g clip-path="url(#p2d)"><path d="M-4,70 C14,73 34,73 52,66 C48,74 42,80 30,84 L-4,82 Z" fill="#4a536b" opacity="0.5" filter="url(#p2f)"/><path d="M102.6,56.6 C102.6,58.2 98,58 93.6,58.4 C88,59 82,59.6 76,60.6 C69,61.8 63,63.2 58.3,65.6 C53,68.4 50,71 46.5,73.6 C43,76.4 41,78.4 37.7,79.8 C34,81.4 30,82.6 25.9,82.8 C17,83.2 8,81.4 0,79.6 " fill="none" stroke="#8892aa" stroke-width="1.8" opacity="0.6" filter="url(#p2g)"/></g><path d="M63,31.3 C68,29.8 74,32.8 80,33.4 C86,34 91,32.2 94,33.2" fill="none" stroke="#5a6480" stroke-width="0.8"/><rect x="0" y="72" width="156" height="32" fill="url(#p2t)"/></g></svg></div><div class="th" style="left:803px;top:254px;width:156px;height:104px"><svg width="156" height="104" viewBox="0 0 156 104"><defs><linearGradient id="p3s" x1="0" y1="0" x2="0" y2="1"><stop offset="0" stop-color="#d8dcef"/><stop offset="0.38" stop-color="#dfd9eb"/><stop offset="0.5" stop-color="#e3cbe3"/><stop offset="0.57" stop-color="#dcb8de"/><stop offset="0.63" stop-color="#b9b0de"/><stop offset="0.69" stop-color="#9aaedb"/><stop offset="0.74" stop-color="#92abd9"/><stop offset="1" stop-color="#92abd9"/></linearGradient><linearGradient id="p3g" x1="0" y1="0" x2="0" y2="1"><stop offset="0" stop-color="#7f6b73"/><stop offset="0.3" stop-color="#6d5a62"/><stop offset="1" stop-color="#4f3f45"/></linearGradient><linearGradient id="p3r" x1="0" y1="0" x2="1" y2="0"><stop offset="0" stop-color="#8e7a74"/><stop offset="0.45" stop-color="#b09c90"/><stop offset="1" stop-color="#8a766e"/></linearGradient><filter id="p3f" x="-30%" y="-30%" width="160%" height="160%"><feGaussianBlur stdDeviation="1.2"/></filter></defs><rect width="156" height="104" fill="url(#p3s)"/><path d="M0,73 C10,72 20,73.5 30,72.8 C40,72 48,70.5 56,70.5 C62,70.8 66,72 70,73 L70,77 L0,77 Z" fill="#8b88b2"/><path d="M84,72 C90,69 96,66.5 100,66 C104,67.5 108,68 112,67 C122,66 134,66.5 144,67 C150,67 153,66 156,65.5 L156,77 L84,77 Z" fill="#8e8cb6"/><rect x="0" y="75.5" width="156" height="2.6" fill="#c7bfcf"/><rect x="0" y="77.6" width="156" height="26.4" fill="url(#p3g)"/><ellipse cx="82" cy="82.5" rx="30" ry="1.8" fill="#a5939c" opacity=".8" filter="url(#p3f)"/><ellipse cx="108" cy="89" rx="22" ry="1.4" fill="#8a7882" opacity=".7" filter="url(#p3f)"/><path d="M128,92 C134,86 142,85 148,80 C151,77 154,77 156,79 L156,104 L120,104 Z" fill="#6a5660" opacity=".9" filter="url(#p3f)"/><path d="M56,79.5 C64,77 70,75.5 78,74.8 C88,75.8 98,77.5 106,80 Z" fill="#6b5662"/><path d="M70.8,75 C71.6,68 73.4,60.5 75.6,57.2 C76.6,56 77.6,57.4 79.2,58 C82.6,62 84.8,69 85.8,75 Z" fill="url(#p3r)"/></svg></div><div class="th" style="left:1020px;top:254px;width:156px;height:104px"><svg width="156" height="104" viewBox="0 0 156 104"><defs><linearGradient id="p4s" x1="0" y1="0" x2="0" y2="1"><stop offset="0" stop-color="#2b5674"/><stop offset="0.2" stop-color="#3a6f95"/><stop offset="0.33" stop-color="#5896bb"/><stop offset="0.42" stop-color="#8fc0da"/><stop offset="1" stop-color="#8fc0da"/></linearGradient><linearGradient id="p4l" x1="0" y1="0" x2="0" y2="1"><stop offset="0" stop-color="#4d5f86"/><stop offset="0.14" stop-color="#7280a5"/><stop offset="0.5" stop-color="#929cb9"/><stop offset="1" stop-color="#8f9ab8"/></linearGradient><linearGradient id="p4e" x1="0" y1="0" x2="1" y2="0"><stop offset="0" stop-color="#3c4f77" stop-opacity="0.55"/><stop offset="0.35" stop-color="#3c4f77" stop-opacity="0"/></linearGradient><filter id="p4f" x="-30%" y="-30%" width="160%" height="160%"><feGaussianBlur stdDeviation="4"/></filter></defs><rect width="156" height="104" fill="url(#p4s)"/><ellipse cx="98" cy="44" rx="52" ry="5.5" fill="#fbe9e4" opacity=".95" filter="url(#p4f)"/><rect x="0" y="56" width="156" height="48" fill="url(#p4l)"/><rect x="0" y="56" width="156" height="48" fill="url(#p4e)"/><path d="M0,43.8 L6,42.2 L13,44 L22,43 L34,45.8 L42,45 L50,43 L61,40.5 L68,42.5 L74,45 L79.6,48.4 L84,46 L90,44.6 L100,43.6 L115,43 L124,41.6 L131,40 L140,39.4 L148,40.2 L156,40 L156,57 L0,57 Z" fill="#1b2839"/><path d="M112,57 C118,52 128,53 134,51 C140,50 146,53 150,57 Z" fill="#121a26"/><circle cx="79.8" cy="48" r="1.1" fill="#f0b070"/><path d="M31,104 C44,86 62,73 92,66.5" fill="none" stroke="#4c5470" stroke-width="1" opacity=".85"/></svg></div><div class="th" style="left:370px;top:382px;width:156px;height:104px"><svg width="156" height="104" viewBox="0 0 156 104"><defs><linearGradient id="p5s" x1="0" y1="0" x2="0" y2="1"><stop offset="0" stop-color="#e6cbe1"/><stop offset="0.25" stop-color="#dcbfdc"/><stop offset="0.5" stop-color="#d9badb"/><stop offset="1" stop-color="#d9badb"/></linearGradient><linearGradient id="p5w" x1="0" y1="0" x2="0" y2="1"><stop offset="0" stop-color="#c3b5dd"/><stop offset="0.1" stop-color="#d6c0de"/><stop offset="0.2" stop-color="#b9b3de"/><stop offset="0.36" stop-color="#cfbcde"/><stop offset="1" stop-color="#dcb7d5"/></linearGradient><linearGradient id="p5r" x1="0" y1="0" x2="0" y2="1"><stop offset="0" stop-color="#4e3c46" stop-opacity="0.95"/><stop offset="0.55" stop-color="#554352" stop-opacity="0.88"/><stop offset="1" stop-color="#645064" stop-opacity="0.5"/></linearGradient><filter id="p5f" x="-30%" y="-30%" width="160%" height="160%"><feGaussianBlur stdDeviation="2.2"/></filter><filter id="p5g" x="-30%" y="-30%" width="160%" height="160%"><feGaussianBlur stdDeviation="0.9"/></filter><filter id="p5n" x="-5%" y="-5%" width="110%" height="110%" color-interpolation-filters="sRGB"><feTurbulence type="fractalNoise" baseFrequency="0.1" numOctaves="2" seed="5" result="d"/><feDisplacementMap in="SourceGraphic" in2="d" scale="4" xChannelSelector="R" yChannelSelector="G" result="disp"/><feTurbulence type="fractalNoise" baseFrequency="0.28 0.2" numOctaves="2" seed="4" result="n"/><feColorMatrix in="n" type="matrix" values="1.2 0 0 0 -0.24  1.05 0 0 0 -0.23  1.1 0 0 0 -0.225  0 0 0 0 1" result="c"/><feComposite in="c" in2="disp" operator="in" result="tex"/><feGaussianBlur in="tex" stdDeviation="0.4"/></filter><filter id="p5m" x="-5%" y="-5%" width="110%" height="110%"><feTurbulence type="fractalNoise" baseFrequency="0.12 0.04" numOctaves="2" seed="9" result="d"/><feDisplacementMap in="SourceGraphic" in2="d" scale="5" xChannelSelector="R" yChannelSelector="G" result="disp"/><feGaussianBlur in="disp" stdDeviation="0.8"/></filter></defs><rect width="156" height="104" fill="url(#p5s)"/><ellipse cx="72" cy="8" rx="14" ry="4" fill="#f6eef6" opacity=".9" filter="url(#p5f)"/><ellipse cx="30" cy="11" rx="30" ry="4" fill="#f0e2ef" opacity=".85" filter="url(#p5f)"/><ellipse cx="116" cy="12" rx="26" ry="5" fill="#f0e2ef" opacity=".85" filter="url(#p5f)"/><ellipse cx="60" cy="20" rx="60" ry="3" fill="#cdb7d8" opacity=".6" filter="url(#p5f)"/><rect x="0" y="54" width="156" height="50" fill="url(#p5w)"/><path d="M0,43.5 C8,41.8 16,41.6 22,43 C28,41.8 34,42.5 40,44 C48,46 54,48 64,48.6 L64,54.5 L0,54.5 Z" fill="#8e9ccb"/><path d="M94,47 C98,45 102,44.5 106,45.5 C110,47.5 116,48 120,46.5 C124,44.5 128,44 131,45.6 C138,48 146,48.6 156,48.6 L156,54.5 L94,54.5 Z" fill="#8e9ccb"/><rect x="0" y="53" width="156" height="2.4" fill="#a9a6d4" opacity=".8"/><path d="M59,66.5 L100,66.5 C99,74 97,82 93,88 C88,94 84,96 78,95 C72,96 68,92 66,86 C62,80 60,72 59,66.5 Z" fill="url(#p5r)" filter="url(#p5m)"/><path d="M59,67 C59.6,61 62.4,56 64.6,51 C65.6,43 67.6,37.6 70.6,36.2 C75,37 80,36 84,36.8 C88,36.4 90,38 91,42 C93.4,45 95,48 95.2,52 C97,56 99.4,61 100.4,67 Z" fill="#624e56" filter="url(#p5n)"/><path d="M66,65 C67,58 71,51 76,49 C80,50 84,56 88,59 C90,61 92,63 93,65 Z" fill="#c0aab4" opacity=".5" filter="url(#p5g)"/><ellipse cx="53.4" cy="65.4" rx="3.4" ry="2.1" fill="#5e4a52"/><ellipse cx="42.6" cy="66" rx="1.6" ry="1" fill="#6e5a64"/><ellipse cx="16.6" cy="64.4" rx="1.8" ry="1" fill="#c9a9b8"/><rect x="58" y="66.2" width="44" height="1.2" fill="#cdb6c4" opacity=".7"/></svg></div><div class="th" style="left:587px;top:382px;width:156px;height:104px"><svg width="156" height="104" viewBox="0 0 156 104"><defs><filter id="p6n" x="-5%" y="-5%" width="110%" height="110%" color-interpolation-filters="sRGB"><feTurbulence type="fractalNoise" baseFrequency="0.09 0.05" numOctaves="2" seed="7" result="d"/><feDisplacementMap in="SourceGraphic" in2="d" scale="4" xChannelSelector="R" yChannelSelector="G" result="disp"/><feTurbulence type="fractalNoise" baseFrequency="0.4 0.22" numOctaves="2" seed="11" result="n"/><feColorMatrix in="n" type="matrix" values="0.95 0 0 0 -0.16  0.78 0 0 0 -0.15  0.76 0 0 0 -0.145  0 0 0 0 1" result="c"/><feComposite in="c" in2="disp" operator="in" result="tex"/><feGaussianBlur in="tex" stdDeviation="0.45"/></filter><filter id="p6g" x="-30%" y="-30%" width="160%" height="160%"><feGaussianBlur stdDeviation="1.5"/></filter><filter id="p6f" x="-30%" y="-30%" width="160%" height="160%"><feGaussianBlur stdDeviation="0.8"/></filter></defs><rect width="156" height="104" fill="#020202"/><g filter="url(#p6n)" fill="#6d4e48"><rect x="0" y="50" width="5" height="22" rx="2.2"/><rect x="2.5" y="50" width="2.5" height="10" rx="1.2"/><rect x="22" y="44" width="4.5" height="26" rx="2.2"/><rect x="28.5" y="51" width="5" height="19" rx="2.2"/><rect x="36" y="47" width="6.5" height="23" rx="2.2"/><rect x="45" y="38" width="8" height="32" rx="2.2"/><rect x="55" y="58" width="5" height="12" rx="2.2"/><rect x="60" y="31" width="6" height="39" rx="2.2"/><rect x="66" y="40" width="12" height="32" rx="2.2"/><rect x="79" y="45" width="4" height="27" rx="2.0"/><rect x="83" y="30" width="7.5" height="42" rx="2.2"/><rect x="90.5" y="42" width="6" height="30" rx="2.2"/><rect x="96" y="42" width="10" height="28" rx="2.2"/><rect x="103" y="40" width="6" height="30" rx="2.2"/><rect x="112" y="43" width="8" height="27" rx="2.2"/><rect x="120" y="56" width="6" height="14" rx="2.2"/><rect x="153.6" y="48" width="2.4" height="22" rx="1.2"/><path d="M0,66 C10,62 18,64 24,60 L40,62 L58,58 L124,60 C132,64 144,66 156,66 L156,74 L0,74 Z"/></g><rect x="-4" y="69" width="164" height="3.6" fill="#9a5236" opacity=".7" filter="url(#p6g)"/><rect x="20" y="70" width="60" height="2.4" fill="#c87a56" opacity=".5" filter="url(#p6g)"/><rect x="0" y="75" width="156" height="29" fill="#020202"/><rect x="-4" y="73" width="164" height="3.4" fill="#020202" filter="url(#p6f)"/></svg></div><div class="th" style="left:803px;top:382px;width:156px;height:104px"><svg width="156" height="104" viewBox="0 0 156 104"><defs><linearGradient id="p7s" x1="0" y1="0" x2="0" y2="1"><stop offset="0" stop-color="#d2e6f2"/><stop offset="0.45" stop-color="#e6eff4"/><stop offset="1" stop-color="#e6eff4"/></linearGradient><linearGradient id="p7d" x1="0" y1="0" x2="0" y2="1"><stop offset="0" stop-color="#e9d392"/><stop offset="0.5" stop-color="#e6cc88"/><stop offset="1" stop-color="#ecd596"/></linearGradient><linearGradient id="p7h" x1="0" y1="0" x2="1" y2="0"><stop offset="0" stop-color="#d9c282"/><stop offset="1" stop-color="#efdca2"/></linearGradient><linearGradient id="p7b" x1="0" y1="0" x2="0" y2="1"><stop offset="0" stop-color="#a39566" stop-opacity="0.95"/><stop offset="0.6" stop-color="#b7a874" stop-opacity="0.6"/><stop offset="1" stop-color="#d9c485" stop-opacity="0"/></linearGradient><linearGradient id="p7c" x1="0" y1="0" x2="0" y2="1"><stop offset="0" stop-color="#9a8e64" stop-opacity="0.95"/><stop offset="0.55" stop-color="#a99b6c" stop-opacity="0.75"/><stop offset="1" stop-color="#d0bc80" stop-opacity="0"/></linearGradient><filter id="p7f" x="-30%" y="-30%" width="160%" height="160%"><feGaussianBlur stdDeviation="1.4"/></filter><filter id="p7g" x="-30%" y="-30%" width="160%" height="160%"><feGaussianBlur stdDeviation="0.6"/></filter></defs><rect width="156" height="104" fill="url(#p7s)"/><path d="M90,46 C104,44.5 118,42 127,39.5 C134,42.5 146,43.5 156,44 L156,60 L90,60 Z" fill="#e4cd8e"/><path d="M92,45.8 C104,44.5 118,42 126.6,39.6 C125.4,43 127,48 133,52 L112,52 Z" fill="#8d8f86" filter="url(#p7g)"/><path d="M0,27 C8,25.4 14,24.6 19,25 C32,27 50,34 70,41 C84,45.5 98,50 112,52.5 L156,52.5 L156,104 L0,104 Z" fill="url(#p7d)"/><path d="M0,30 C10,27 20,27 30,31 C20,32 8,35 0,40 Z" fill="#d4bd7e" opacity=".7" filter="url(#p7f)"/><path d="M0,49.5 C18,48 40,48.4 56,49.6 C60,51 62,53 62,55.5 C40,58 20,60.5 0,60.5 Z" fill="url(#p7b)" filter="url(#p7g)"/><path d="M80,51.5 C96,52.6 120,52.4 156,50.5 L156,67 C130,68 104,66 84,58 Z" fill="url(#p7c)" filter="url(#p7g)"/><path d="M0,60 C20,58 40,62 56,60 C60,57 62,55.5 64,55.5 C76,57 92,63 110,66 C128,69 144,68 156,67 L156,104 L0,104 Z" fill="url(#p7d)"/><path d="M25.5,62.6 C36,59.6 50,58.6 62,55.6 C61.6,60 58,63.6 51,65.2 C42,66.4 32,65 25.5,62.6 Z" fill="#86887e" filter="url(#p7g)"/><path d="M84,87 C92,80 122,75.6 156,76 L156,104 L132,104 C124,96 104,91 84,87 Z" fill="#807f72" filter="url(#p7g)"/><path d="M100,90 C120,84 140,84 156,86 L156,104 L132,104 C124,98 112,93 100,90 Z" fill="#a09d8c" opacity=".7" filter="url(#p7f)"/><rect x="0" y="102.6" width="130" height="1.4" fill="#f0c060" opacity=".7"/></svg></div><div class="th" style="left:1020px;top:382px;width:156px;height:104px"><svg width="156" height="104" viewBox="0 0 156 104"><defs><linearGradient id="p8s" x1="0" y1="0" x2="0" y2="1"><stop offset="0" stop-color="#020614"/><stop offset="0.25" stop-color="#04102c"/><stop offset="0.52" stop-color="#0a2250"/><stop offset="1" stop-color="#0a2250"/></linearGradient><linearGradient id="p8l" x1="0" y1="0" x2="1" y2="0"><stop offset="0" stop-color="#837c86"/><stop offset="0.45" stop-color="#9d959e"/><stop offset="0.78" stop-color="#b9b0b7"/><stop offset="1" stop-color="#a39aa2"/></linearGradient><linearGradient id="p8m" x1="0" y1="0" x2="1" y2="0.25"><stop offset="0" stop-color="#a49aa0"/><stop offset="0.35" stop-color="#6e6468"/><stop offset="0.7" stop-color="#3a3034"/><stop offset="1" stop-color="#1c1416"/></linearGradient><linearGradient id="p8r" x1="0" y1="0" x2="1" y2="0"><stop offset="0" stop-color="#8a8490"/><stop offset="1" stop-color="#9a94a0"/></linearGradient><linearGradient id="p8k" x1="0" y1="0" x2="0" y2="1"><stop offset="0" stop-color="#000" stop-opacity="0"/><stop offset="0.5" stop-color="#050203" stop-opacity="0.75"/><stop offset="1" stop-color="#040203" stop-opacity="1"/></linearGradient><filter id="p8f" x="-30%" y="-30%" width="160%" height="160%"><feGaussianBlur stdDeviation="1.6"/></filter><filter id="p8g" x="-30%" y="-30%" width="160%" height="160%"><feGaussianBlur stdDeviation="0.5"/></filter></defs><rect width="156" height="104" fill="url(#p8s)"/><path d="M0,52.8 C30,48.5 56,43 75.9,37 C100,44 130,50 156,52.6 L156,104 L0,104 Z" fill="#0e090b"/><path d="M75.9,37 C100,44 130,50 156,52.6 L156,54.2 C130,55.4 100,54.4 84,51.6 C76,50.6 71,49.8 69.6,48 C70.4,44 73,40 75.9,37 Z" fill="url(#p8r)" filter="url(#p8g)"/><path d="M0,52.8 C30,48.5 56,43 75.9,37 C73,40 70.4,44 69.6,48 C71,50.6 74,52 78,53 C60,55.6 30,58 0,62 Z" fill="url(#p8l)" filter="url(#p8g)"/><path d="M0,61.4 C30,57.6 60,55.2 79,53.4 C86,55 92,57 98,60 C110,70 130,84 156,92 L156,104 L0,104 Z" fill="url(#p8m)"/><path d="M69.6,48 C72,51.6 80,53.6 92,54.6 C110,56 136,55.4 156,54.2 L156,70 C130,66 104,60 80,54 Z" fill="#0b0608" filter="url(#p8g)"/><rect x="0" y="66" width="156" height="38" fill="url(#p8k)"/><path d="M0,82 C40,86 100,94 156,100 L156,104 L0,104 Z" fill="#040203" filter="url(#p8f)"/></svg></div><div class="th" style="left:370px;top:510px;width:156px;height:104px"><svg width="156" height="104" viewBox="0 0 156 104"><defs><linearGradient id="r1" x1="0" y1="0" x2="0" y2="1"><stop offset="0" stop-color="#39455e"/><stop offset="0.22" stop-color="#4a5a7a"/><stop offset="1" stop-color="#2a3040"/></linearGradient></defs><rect width="156" height="104" fill="url(#r1)"/><path d="M54,22 C55,19.4 57,19 58.4,21 C60,18 62.4,17.6 63.6,20 C65,17.4 67,16.6 68.6,19.4 C70,16 73,15.4 74.6,18.4 C76.4,17.4 78,18.6 79,21 L84,22 Z" fill="#141018"/></svg></div><div class="th" style="left:587px;top:510px;width:156px;height:104px"><svg width="156" height="104" viewBox="0 0 156 104"><defs><linearGradient id="r2" x1="0" y1="0" x2="1" y2="0.2"><stop offset="0" stop-color="#a6c4e4"/><stop offset="0.55" stop-color="#c4d7ec"/><stop offset="1" stop-color="#dbe0ee"/></linearGradient><filter id="r2f" x="-30%" y="-30%" width="160%" height="160%"><feGaussianBlur stdDeviation="0.5"/></filter></defs><rect width="156" height="104" fill="url(#r2)"/><path d="M108,22 C113,19 118,15 122,13.4 C125,13.6 128,16 132,18.4 C138,20 146,21 152,22 Z" fill="#e8ecf2" filter="url(#r2f)"/><path d="M116,22 C119,19 121,17 123,16 C126,18 130,20 136,22 Z" fill="#9aa0ac" opacity=".8" filter="url(#r2f)"/></svg></div><div class="th" style="left:803px;top:510px;width:156px;height:104px"><svg width="156" height="104" viewBox="0 0 156 104"><defs><linearGradient id="r3" x1="0" y1="0" x2="1" y2="0.15"><stop offset="0" stop-color="#f0a08c"/><stop offset="0.3" stop-color="#eeb0a0"/><stop offset="0.6" stop-color="#c9b4d0"/><stop offset="1" stop-color="#a9a6d2"/></linearGradient><filter id="r3f" x="-30%" y="-30%" width="160%" height="160%"><feGaussianBlur stdDeviation="3"/></filter></defs><rect width="156" height="104" fill="url(#r3)"/><ellipse cx="96" cy="2" rx="22" ry="4" fill="#f39a78" opacity=".9" filter="url(#r3f)"/><ellipse cx="30" cy="16" rx="30" ry="7" fill="#f3a890" opacity=".8" filter="url(#r3f)"/><ellipse cx="100" cy="18" rx="30" ry="6" fill="#cbbbd8" opacity=".8" filter="url(#r3f)"/><ellipse cx="146" cy="4" rx="12" ry="5" fill="#9d9cc8" opacity=".8" filter="url(#r3f)"/><rect x="55" y="20" width="5" height="2" fill="#6a3a2a"/></svg></div><div class="th" style="left:1020px;top:510px;width:156px;height:104px"><svg width="156" height="104" viewBox="0 0 156 104"><defs><linearGradient id="r4" x1="0" y1="0" x2="1" y2="0.15"><stop offset="0" stop-color="#c28aa8"/><stop offset="0.35" stop-color="#c896b4"/><stop offset="0.7" stop-color="#9a8cc0"/><stop offset="1" stop-color="#6c7ab4"/></linearGradient><filter id="r4f" x="-30%" y="-30%" width="160%" height="160%"><feGaussianBlur stdDeviation="3"/></filter></defs><rect width="156" height="104" fill="url(#r4)"/><ellipse cx="22" cy="6" rx="22" ry="6" fill="#e49aa0" opacity=".85" filter="url(#r4f)"/><ellipse cx="86" cy="17" rx="26" ry="5" fill="#f6a276" opacity=".95" filter="url(#r4f)"/><ellipse cx="44" cy="18" rx="22" ry="4" fill="#e79aa2" opacity=".8" filter="url(#r4f)"/><ellipse cx="110" cy="4" rx="20" ry="5" fill="#8f86c0" opacity=".8" filter="url(#r4f)"/><ellipse cx="150" cy="12" rx="10" ry="8" fill="#6674b2" opacity=".8" filter="url(#r4f)"/></svg></div></div>
<svg class="a" style="left:78px;top:420px" width="26" height="150" viewBox="78 420 26 150"><path d="M81.2 425.3 L99 425.3 L90.1 439.8 Z" fill="#838385"/><path d="M83.2 542.8 L98 551.8 L83.2 560.8 Z" fill="#838385"/></svg>
<svg class="a" style="left:120px;top:458px" width="34" height="30" viewBox="120 458 34 30"><defs><linearGradient id="fg" x1="0" y1="0" x2="0" y2="1"><stop offset="0" stop-color="#78b9e6"/><stop offset="1" stop-color="#5ea3d6"/></linearGradient></defs><path d="M121 462 Q121 460 123 460 L131 460 Q132.5 460 133.5 461.2 L135 463 L149 463 Q151 463 151 465 L151 482 Q151 484 149 484 L123 484 Q121 484 121 482 Z" fill="#4a8cbb"/><path d="M121 467.5 Q121 465.5 123 465.5 L149 465.5 Q151 465.5 151 467.5 L151 482 Q151 484 149 484 L123 484 Q121 484 121 482 Z" fill="url(#fg)"/></svg>
<div class="a" style="left:123px;top:499px;width:26px;height:26px;border-radius:50%;background:radial-gradient(circle at 50% 50%,#fff 0,rgba(255,255,255,.75) 25%,rgba(255,255,255,0) 72%),conic-gradient(from 0deg,#c8f46a,#fff06a 30deg,#ffa86a 60deg,#ff6f86 90deg,#ff6ad0 125deg,#d86aff 155deg,#8a78ff 200deg,#6aa8ff 235deg,#6ae6f0 270deg,#6af0a8 305deg,#8af47a 335deg,#c8f46a);box-shadow:0 1px 2px rgba(0,0,0,.6)"></div>
<span class="t" style="left:104.4px;top:418.5px;font-size:25px;letter-spacing:0.175px;color:#dddddd;-webkit-text-stroke:0.45px currentColor;">Apple</span>
<span class="t" style="left:159.2px;top:458.9px;font-size:25px;letter-spacing:0.333px;color:#e0e0e0;-webkit-text-stroke:0.45px currentColor;">Desktop Pictures</span>
<span class="t" style="left:159.6px;top:498.9px;font-size:25px;letter-spacing:0.04px;color:#dddddd;-webkit-text-stroke:0.45px currentColor;">Colors</span>
<span class="t" style="left:103.5px;top:538.7px;font-size:25px;letter-spacing:0.067px;color:#dddddd;-webkit-text-stroke:0.45px currentColor;">Folders</span>
<span class="t" style="left:413.4px;top:423.5px;font-size:25px;letter-spacing:0.25px;color:#dadada;-webkit-text-stroke:0.45px currentColor;">Dynamic Desktop</span>
<span class="t" style="left:413.4px;top:613.5px;font-size:25px;letter-spacing:0.313px;color:#dadada;-webkit-text-stroke:0.45px currentColor;">Desktop Pictures</span>
<div class="a" id="pm"><div class="a" style="left:49px;top:0;width:1px;height:38px;background:#4e4f51"></div></div>
<svg class="a" style="left:66px;top:964px" width="98" height="38" viewBox="66 964 98 38"><path d="M78 983 H100 M89 972 V994" stroke="#fff" stroke-width="2" fill="none"/><path d="M130 983 H152" stroke="#8f9092" stroke-width="2" fill="none"/></svg>
<div class="a cb" style="top:970px"></div><div class="a cb" style="top:1010px"></div>
<span class="t" style="left:443.9px;top:971.3px;font-size:26.5px;letter-spacing:0.493px;color:#717274;-webkit-text-stroke:0.45px currentColor;">Change picture:</span>
<span class="t" style="left:443.5px;top:1011.0px;font-size:26.5px;letter-spacing:0.209px;color:#717274;-webkit-text-stroke:0.45px currentColor;">Random order</span>
<div class="a" id="every"></div>
<span class="t" style="left:679.9px;top:969.0px;font-size:26.5px;letter-spacing:0.32px;color:#7b7c7e;-webkit-text-stroke:0.45px currentColor;">Every 30 minutes</span>
<svg class="a" style="left:1048px;top:968px" width="26" height="30" viewBox="1048 968 26 30"><path d="M1054.2 979 L1060.6 972.4 L1067 979 M1054.2 987 L1060.6 993.8 L1067 987" fill="none" stroke="#87888a" stroke-width="2.6" stroke-linecap="round" stroke-linejoin="round"/></svg>
<div class="a" id="help"></div>
<span class="t" style="left:1231px;top:1021.6px;width:40px;text-align:center;font-size:30.5px;font-weight:400;-webkit-text-stroke:0.8px currentColor;color:#e6e6e6">?</span>
</body></html>
